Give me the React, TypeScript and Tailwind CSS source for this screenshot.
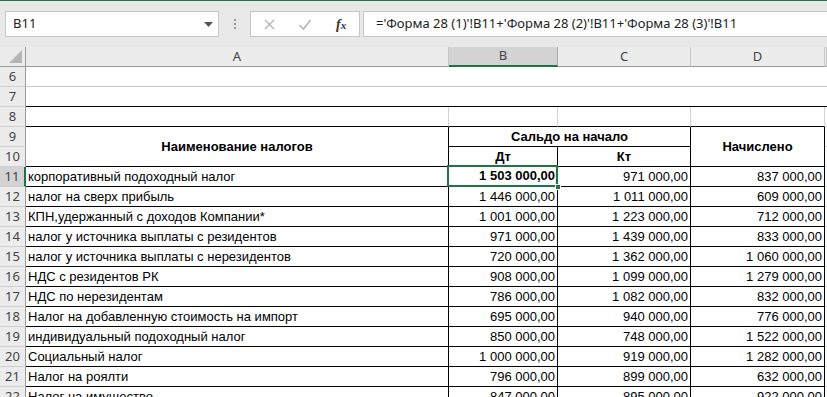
import React from 'react';

type Row = { n: number; name: string; b: string; c: string; d: string };

const rows: Row[] = [
  { n: 11, name: 'корпоративный подоходный налог', b: '1 503 000,00', c: '971 000,00', d: '837 000,00' },
  { n: 12, name: 'налог на сверх прибыль', b: '1 446 000,00', c: '1 011 000,00', d: '609 000,00' },
  { n: 13, name: 'КПН,удержанный с доходов Компании*', b: '1 001 000,00', c: '1 223 000,00', d: '712 000,00' },
  { n: 14, name: 'налог у источника выплаты с резидентов', b: '971 000,00', c: '1 439 000,00', d: '833 000,00' },
  { n: 15, name: 'налог у источника выплаты с нерезидентов', b: '720 000,00', c: '1 362 000,00', d: '1 060 000,00' },
  { n: 16, name: 'НДС с резидентов РК', b: '908 000,00', c: '1 099 000,00', d: '1 279 000,00' },
  { n: 17, name: 'НДС по нерезидентам', b: '786 000,00', c: '1 082 000,00', d: '832 000,00' },
  { n: 18, name: 'Налог на добавленную стоимость на импорт', b: '695 000,00', c: '940 000,00', d: '776 000,00' },
  { n: 19, name: 'индивидуальный подоходный налог', b: '850 000,00', c: '748 000,00', d: '1 522 000,00' },
  { n: 20, name: 'Социальный налог', b: '1 000 000,00', c: '919 000,00', d: '1 282 000,00' },
  { n: 21, name: 'Налог на роялти', b: '796 000,00', c: '899 000,00', d: '632 000,00' },
  { n: 22, name: 'Налог на имущество', b: '847 000,00', c: '895 000,00', d: '922 000,00' },
];

const cellFont = { fontFamily: '"Liberation Sans", Arial, sans-serif' };
const uiFont = { fontFamily: '"Noto Sans", "Open Sans", sans-serif' };

function RowHead({ n, active }: { n: number; active?: boolean }) {
  return (
    <div
      className={`flex items-center justify-center border-b border-[#d0d0d0] text-[13px] text-[#444] ${
        active ? 'bg-[#d3d3d3] border-r-2 border-r-[#217346]' : 'bg-[#ececec] border-r border-r-[#9b9b9b]'
      }`}
      style={uiFont}
    >
      {n}
    </div>
  );
}

export default function App() {
  return (
    <div className="w-[827px] h-[397px] overflow-hidden bg-white text-black" style={cellFont}>
      {/* formula bar */}
      <div className="h-[47px] bg-[#e8e8e8] border-t border-[#217346] flex items-start pt-[10px] pl-[5px]">
        <div className="w-[214px] h-[26px] bg-white border border-[#c6c6c6] flex items-center justify-between pl-[7px] pr-[5px]">
          <span className="text-[13px] text-[#222]" style={uiFont}>B11</span>
          <svg width="9" height="5" viewBox="0 0 9 5">
            <path d="M0 0h9L4.5 5z" fill="#555" />
          </svg>
        </div>
        <div className="w-[31px] h-[26px] flex flex-col items-center justify-center gap-[2px]">
          <span className="w-[2px] h-[2px] bg-[#999]" />
          <span className="w-[2px] h-[2px] bg-[#999]" />
          <span className="w-[2px] h-[2px] bg-[#999]" />
        </div>
        <div className="w-[110px] h-[26px] bg-white border border-[#c6c6c6] flex items-center pl-[12px]">
          <svg width="13" height="13" viewBox="0 0 13 13">
            <path d="M2 2l9 9M11 2l-9 9" stroke="#b3b3b3" strokeWidth="1.3" fill="none" />
          </svg>
          <svg className="ml-[22px]" width="14" height="13" viewBox="0 0 14 13">
            <path d="M1.5 7l4 4L12.5 2" stroke="#b3b3b3" strokeWidth="1.6" fill="none" />
          </svg>
          <span
            className="ml-[24px] text-[14px] italic font-bold text-[#333]"
            style={{ fontFamily: '"Liberation Serif", serif' }}
          >
            f<span className="text-[11px]">x</span>
          </span>
        </div>
        <div className="flex-1 ml-[3px] h-[26px] bg-white border border-[#c6c6c6] border-r-0 flex items-center pl-[12px]">
          <span className="text-[13px] text-[#222] whitespace-nowrap" style={uiFont}>
            ='Форма 28 (1)'!B11+'Форма 28 (2)'!B11+'Форма 28 (3)'!B11
          </span>
        </div>
      </div>

      {/* sheet */}
      <div className="grid grid-cols-[26px_423px_109px_133px_134px_1fr] auto-rows-[20px] text-[13px]">
        {/* column headers */}
        <div className="relative bg-[#ececec] border-r border-b border-[#9b9b9b]">
          <svg className="absolute right-[3px] bottom-[3px]" width="13" height="13" viewBox="0 0 13 13">
            <path d="M13 0v13H0z" fill="#b5b5b5" />
          </svg>
        </div>
        {['A', 'B', 'C', 'D', ''].map((l) => (
          <div
            key={l}
            className={`flex items-center justify-center text-[13px] text-[#444] ${
              l === 'B'
                ? 'bg-[#d3d3d3] border-b-2 border-b-[#217346] border-r border-r-[#ababab]'
                : 'bg-[#ececec] border-b border-b-[#9b9b9b] border-r border-r-[#c6c6c6]'
            }`}
            style={uiFont}
          >
            {l}
          </div>
        ))}

        {/* rows 6-8 */}
        <RowHead n={6} />
        <div className="col-span-5 border-b border-[#c8c8c8]" />
        <RowHead n={7} />
        <div className="col-span-5 border-b border-black" />
        <RowHead n={8} />
        <div className="border-r border-b border-r-[#d4d4d4] border-b-black" />
        <div className="border-r border-b border-r-[#d4d4d4] border-b-black" />
        <div className="border-r border-b border-r-[#d4d4d4] border-b-black" />
        <div className="border-r border-b border-r-[#d4d4d4] border-b-black" />
        <div className="border-b border-[#d4d4d4]" />

        {/* rows 9-10 header */}
        <RowHead n={9} />
        <div className="row-span-2 border-r border-b border-black flex items-center justify-center font-bold">
          Наименование налогов
        </div>
        <div className="col-span-2 border-r border-b border-black flex items-center justify-center font-bold">
          Сальдо на начало
        </div>
        <div className="row-span-2 border-r border-b border-black flex items-center justify-center font-bold">
          Начислено
        </div>
        <div className="border-b border-[#d4d4d4]" />
        <RowHead n={10} />
        <div className="border-r border-b border-black flex items-center justify-center font-bold">Дт</div>
        <div className="border-r border-b border-black flex items-center justify-center font-bold">Кт</div>
        <div className="border-b border-[#d4d4d4]" />

        {/* data */}
        {rows.map((r) => (
          <React.Fragment key={r.n}>
            <RowHead n={r.n} active={r.n === 11} />
            <div className="border-r border-b border-black flex items-center pl-[2px] whitespace-nowrap overflow-hidden">
              {r.name}
            </div>
            {r.n === 11 ? (
              <div className="relative border-r border-b border-black">
                <div className="absolute -left-[2px] -top-[2px] -right-[1px] -bottom-[1px] border-2 border-[#217346] flex items-center justify-end pr-[1px] font-bold">
                  {r.b}
                </div>
                <span className="absolute -right-[4px] -bottom-[4px] w-[6px] h-[6px] bg-[#217346] border border-white" />
              </div>
            ) : (
              <div className="border-r border-b border-black flex items-center justify-end pr-[2px]">{r.b}</div>
            )}
            <div className="border-r border-b border-black flex items-center justify-end pr-[2px]">{r.c}</div>
            <div className="border-r border-b border-black flex items-center justify-end pr-[2px]">{r.d}</div>
            <div className="border-b border-[#d4d4d4]" />
          </React.Fragment>
        ))}
      </div>
    </div>
  );
}
